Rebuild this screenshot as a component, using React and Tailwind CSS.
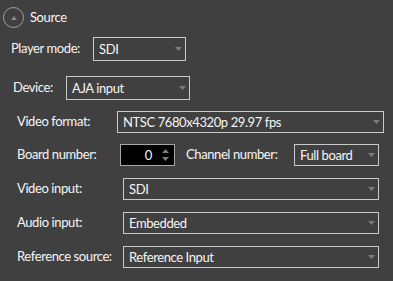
import React from 'react';

const Arrow = () => (
  <svg width="7" height="4" viewBox="0 0 7 4" className="shrink-0">
    <path d="M0 0 H7 L3.5 4 Z" fill="#7c7c7c" />
  </svg>
);

function Combo({ value, className = '' }) {
  return (
    <div
      className={`flex items-center justify-between border border-[#c9c9c9] pl-[5px] pr-[3px] ${className}`}
    >
      <span className="leading-none whitespace-nowrap">{value}</span>
      <Arrow />
    </div>
  );
}

function Row({ children, className = '' }) {
  return <div className={`flex items-center ${className}`}>{children}</div>;
}

export default function App() {
  return (
    <div className="w-[393px] h-[281px] bg-[#404040] text-[13px] tracking-[-0.4px] text-[#f5f5f5] font-['Lato',sans-serif] overflow-hidden">
      {/* Section header */}
      <div className="flex items-center pl-[3px] pt-[7px]">
        <div className="w-[21px] h-[21px] rounded-full border border-[#a3a3a3] flex items-center justify-center">
          <svg width="6" height="4" viewBox="0 0 6 4">
            <path d="M0 4 L3 0 L6 4 Z" fill="#8a8a8a" />
          </svg>
        </div>
        <span className="ml-[6px]">Source</span>
      </div>

      <Row className="mt-[9px] pl-[11px]">
        <span className="w-[82px]">Player mode:</span>
        <Combo value="SDI" className="w-[93px] h-[24px]" />
      </Row>

      <Row className="mt-[15px] pl-[13px]">
        <span className="w-[53px]">Device:</span>
        <Combo value="AJA input" className="w-[124px] h-[24px]" />
      </Row>

      <Row className="mt-[11px] pl-[17px]">
        <span className="w-[100px]">Video format:</span>
        <Combo value="NTSC 7680x4320p 29.97 fps" className="w-[267px] h-[22px]" />
      </Row>

      <Row className="mt-[11px] pl-[17px]">
        <span className="w-[103px]">Board number:</span>
        <div className="w-[55px] h-[22px] bg-black border border-[#a8a8a8] flex items-center">
          <span className="flex-1 text-right leading-none">0</span>
          <div className="flex flex-col gap-[4px] ml-[10px] mr-[5px]">
            <svg width="7" height="4" viewBox="0 0 7 4">
              <path d="M0 4 L3.5 0 L7 4 Z" fill="#7c7c7c" />
            </svg>
            <svg width="7" height="4" viewBox="0 0 7 4">
              <path d="M0 0 H7 L3.5 4 Z" fill="#7c7c7c" />
            </svg>
          </div>
        </div>
        <span className="ml-[11px] w-[108px]">Channel number:</span>
        <Combo value="Full board" className="w-[85px] h-[22px]" />
      </Row>

      <Row className="mt-[12px] pl-[17px]">
        <span className="w-[106px]">Video input:</span>
        <Combo value="SDI" className="w-[256px] h-[22px]" />
      </Row>

      <Row className="mt-[12px] pl-[17px]">
        <span className="w-[106px]">Audio input:</span>
        <Combo value="Embedded" className="w-[256px] h-[22px]" />
      </Row>

      <Row className="mt-[12px] pl-[17px]">
        <span className="w-[106px]">Reference source:</span>
        <Combo value="Reference Input" className="w-[256px] h-[22px]" />
      </Row>
    </div>
  );
}
